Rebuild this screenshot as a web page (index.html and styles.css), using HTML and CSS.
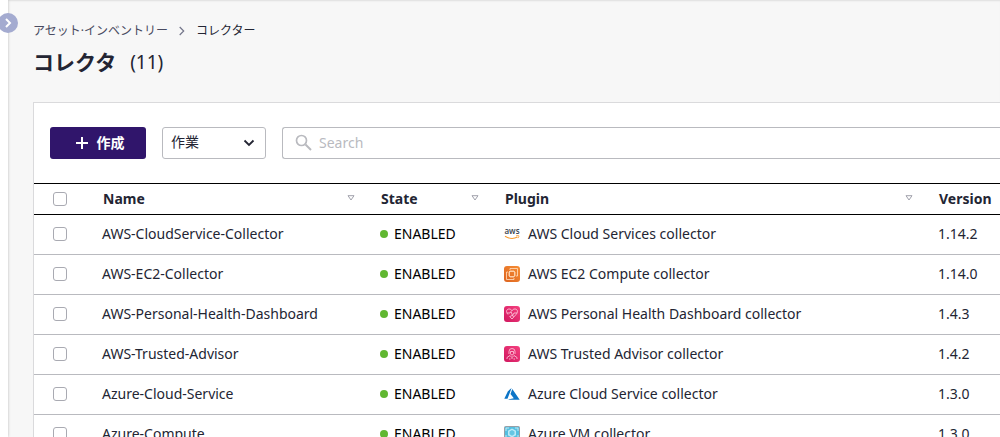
FILE: index.html
```html
<!DOCTYPE html>
<html lang="ja">
<head>
<meta charset="utf-8">
<title>コレクタ</title>
<link rel="stylesheet" href="styles.css">
</head>
<body>
<div class="app">
  <aside class="rail">
    <button class="rail-toggle" type="button" aria-label="メニューを開く">
      <svg width="8" height="10" viewBox="0 0 8 10" fill="none" stroke="#fff" stroke-width="2"><path d="M2 1l4 4-4 4"/></svg>
    </button>
  </aside>
  <main class="main">
    <nav class="crumbs">
      <a class="crumb" href="#">アセット·インベントリー</a>
      <svg width="6" height="10" viewBox="0 0 6 10" fill="none" stroke="#73758a" stroke-width="1.2"><path d="M.7 1l4 4-4 4"/></svg>
      <a class="crumb current" href="#">コレクター</a>
    </nav>
    <h1 class="title">コレクタ <span class="count">(11)</span></h1>
    <section class="card">
      <div class="toolbar">
        <button class="create" type="button">
          <svg width="12" height="12" viewBox="0 0 12 12" stroke="#fff" stroke-width="2"><path d="M6 0v12M0 6h12"/></svg>
          <span>作成</span>
        </button>
        <div class="picker">
          <select class="select" aria-label="作業"><option>作業</option></select>
          <svg class="chevron" width="12" height="8" viewBox="0 0 12 8" fill="none" stroke="#232533" stroke-width="1.8"><path d="M1.500 1.500L6 6l4.500-4.500"/></svg>
        </div>
        <label class="search">
          <svg width="18" height="18" viewBox="0 0 18 18" fill="none" stroke="#b9babf"><circle cx="6.500" cy="6.500" r="5" stroke-width="1.7"/><path d="M10.500 10.500l5.500 5.500" stroke-width="2"/></svg>
          <input class="search-input" type="text" placeholder="Search" aria-label="Search">
        </label>
      </div>
      <table class="table">
        <colgroup><col class="c-check"><col class="c-name"><col class="c-state"><col><col class="c-version"></colgroup>
        <thead>
          <tr>
            <th class="check"><input class="box" type="checkbox" aria-label="すべて選択"></th>
            <th><div class="head">Name <svg class="sort" viewBox="0 0 8 6"><path d="M1 .7h6L4 5z"/></svg></div></th>
            <th><div class="head">State <svg class="sort" viewBox="0 0 8 6"><path d="M1 .7h6L4 5z"/></svg></div></th>
            <th><div class="head">Plugin <svg class="sort" viewBox="0 0 8 6"><path d="M1 .7h6L4 5z"/></svg></div></th>
            <th><div class="head">Version</div></th>
          </tr>
        </thead>
        <tbody>
          <tr>
            <td class="check"><input class="box" type="checkbox" aria-label="AWS-CloudService-Collector"></td>
            <td>AWS-CloudService-Collector</td>
            <td><div class="state">ENABLED</div></td>
            <td><div class="plugin"><svg class="logo" viewBox="0 0 16 16"><text class="aws" x="8" y="8" text-anchor="middle">aws</text><path d="M1 10.300q6.500 4 12.500.8" fill="none" stroke="#f79a2c" stroke-width="1.100"/><path d="M12 9.800q3-.7 3 .1t-1 2.200" fill="none" stroke="#f79a2c" stroke-width=".8"/></svg>AWS Cloud Services collector</div></td>
            <td>1.14.2</td>
          </tr>
          <tr>
            <td class="check"><input class="box" type="checkbox" aria-label="AWS-EC2-Collector"></td>
            <td>AWS-EC2-Collector</td>
            <td><div class="state">ENABLED</div></td>
            <td><div class="plugin"><svg class="logo" viewBox="0 0 16 16"><defs><linearGradient id="orange" x1="0" y1="1" x2="1" y2="0"><stop stop-color="#dd6420"/><stop offset="1" stop-color="#f78e34"/></linearGradient></defs><rect width="16" height="16" rx="3" fill="url(#orange)"/><g fill="none" stroke="#ffe0c2" stroke-width=".8"><rect x="5.500" y="5.500" width="5" height="5"/><path d="M7 5.500V4M9 5.500V4M7 12v-1.500M9 12v-1.500M10.500 7H12M10.500 9H12M5.500 7H4M5.500 9H4M6 4V2.500h7.500V10H12M4 6H2.500v7.500H10V12"/></g></svg>AWS EC2 Compute collector</div></td>
            <td>1.14.0</td>
          </tr>
          <tr>
            <td class="check"><input class="box" type="checkbox" aria-label="AWS-Personal-Health-Dashboard"></td>
            <td>AWS-Personal-Health-Dashboard</td>
            <td><div class="state">ENABLED</div></td>
            <td><div class="plugin"><svg class="logo" viewBox="0 0 16 16"><defs><linearGradient id="pink" x1="0" y1="1" x2="1" y2="0"><stop stop-color="#d0175f"/><stop offset="1" stop-color="#f5417f"/></linearGradient></defs><rect width="16" height="16" rx="3" fill="url(#pink)"/><g fill="none" stroke="#ffd3e3" stroke-width=".8"><path d="M4 8.500C1.500 6 2.500 3 5 3c1.500 0 2.500.7 3 1.700C8.500 3.700 9.500 3 11 3c2.500 0 3.500 3 1 5.500L8 13l-2.500-2.700"/><path d="M3 7h3l1-1.500 1.500 4L10 7h3M6 10.500l2-1 2 1"/></g></svg>AWS Personal Health Dashboard collector</div></td>
            <td>1.4.3</td>
          </tr>
          <tr>
            <td class="check"><input class="box" type="checkbox" aria-label="AWS-Trusted-Advisor"></td>
            <td>AWS-Trusted-Advisor</td>
            <td><div class="state">ENABLED</div></td>
            <td><div class="plugin"><svg class="logo" viewBox="0 0 16 16"><rect width="16" height="16" rx="3" fill="url(#pink)"/><g fill="none" stroke="#ffd3e3" stroke-width=".8"><path d="M5 8V5.500a3 3 0 016 0V8M6.500 5.500h3v2a1.500 1.500 0 01-3 0zM3 13v-1.500L6 9.500l2 2 2-2 3 2V13M5 13h1.500M9.500 13H11M8 11.500V13"/></g></svg>AWS Trusted Advisor collector</div></td>
            <td>1.4.2</td>
          </tr>
          <tr>
            <td class="check"><input class="box" type="checkbox" aria-label="Azure-Cloud-Service"></td>
            <td>Azure-Cloud-Service</td>
            <td><div class="state">ENABLED</div></td>
            <td><div class="plugin"><svg class="logo" viewBox="0 0 16 16" fill="#0b74c7"><path d="M7.600 2L3.900 5.200.3 12.700h3.200zM8.300 3l-1.800 5 3.300 4.300L3.500 13.700h12.200z"/></svg>Azure Cloud Service collector</div></td>
            <td>1.3.0</td>
          </tr>
          <tr>
            <td class="check"><input class="box" type="checkbox" aria-label="Azure-Compute"></td>
            <td>Azure-Compute</td>
            <td><div class="state">ENABLED</div></td>
            <td><div class="plugin"><svg class="logo" viewBox="0 0 16 16"><rect x=".5" y=".5" width="15" height="13" rx="1" fill="#55bfe0" stroke="#989fa6"/><path d="M8 2.500l4 2.200v4.600l-4 2.200-4-2.200V4.700z" fill="#bdeaf7"/><path d="M8 4l2.500 1.500v2.800L8 9.700 5.500 8.300V5.500z" fill="#65c6e3"/><path d="M2 5V2h3M11 2h3v3M2 9v3h3M14 9v3h-3" fill="none" stroke="#d7f3fa" stroke-width=".8"/><path d="M5 15.500h6" stroke="#989fa6"/></svg>Azure VM collector</div></td>
            <td>1.3.0</td>
          </tr>
        </tbody>
      </table>
    </section>
  </main>
</div>
</body>
</html>
```
FILE: styles.css
```css
* { box-sizing: border-box; }

body {
  margin: 0;
  color: #232533;
  font: 14px/20px "Noto Sans", "Noto Sans CJK JP", sans-serif;
}

button, input, select { font: inherit; color: inherit; margin: 0; }

.app {
  display: flex;
  height: 100vh;
  overflow: hidden;
  background: #f7f7f7;
}

.rail {
  position: relative;
  flex: none;
  width: 8px;
  background: #fff;
  box-shadow: 0 0 3px rgba(0, 0, 0, .25);
}

.rail-toggle {
  position: absolute;
  top: 13px;
  left: -2px;
  display: flex;
  align-items: center;
  justify-content: center;
  width: 20px;
  height: 20px;
  padding: 0;
  border: 0;
  border-radius: 50%;
  background: #a4abd0;
}

.main {
  flex: 1;
  min-width: 0;
  padding: 21px 0 0 25px;
  box-shadow: inset 0 2px 2px -1px rgba(0, 0, 0, .1);
}

.crumbs {
  display: flex;
  align-items: center;
  gap: 11px;
  font-size: 12px;
}

.crumb { color: #484a60; text-decoration: none; }
.crumb.current { color: #232533; }

.title {
  display: flex;
  gap: 14px;
  margin: 5px 0 24px;
  font-size: 21px;
  line-height: 32px;
  font-weight: 700;
}

.count { font-size: 19px; font-weight: 400; }

.card {
  border: 1px solid #dadadc;
  border-right: 0;
  background: #fff;
}

.toolbar {
  display: flex;
  gap: 16px;
  padding: 24px 0 24px 16px;
}

.create {
  display: flex;
  align-items: center;
  justify-content: center;
  gap: 9px;
  width: 96px;
  height: 32px;
  padding: 0 0 0 4px;
  border: 0;
  border-radius: 3px;
  background: #30156b;
  color: #fff;
  font-weight: 700;
}

.picker { position: relative; width: 104px; }

.select {
  width: 100%;
  height: 32px;
  padding: 0 8px 2px;
  border: 1px solid #b9babf;
  border-radius: 3px;
  background: #fff;
  appearance: none;
}

.chevron {
  position: absolute;
  top: 12px;
  right: 11px;
  pointer-events: none;
}

.search {
  display: flex;
  flex: 1;
  align-items: center;
  gap: 6px;
  height: 32px;
  padding-left: 12px;
  border: 1px solid #b9babf;
  border-right: 0;
  border-radius: 3px 0 0 3px;
}

.search-input {
  flex: 1;
  min-width: 0;
  padding: 0;
  border: 0;
  outline: 0;
  background: none;
}

.search-input::placeholder { color: #b9babf; opacity: 1; }

.table {
  width: 100%;
  table-layout: fixed;
  border-collapse: separate;
  border-spacing: 0;
}

.c-check { width: 60px; }
.c-name { width: 278px; }
.c-state { width: 124px; }
.c-version { width: 70px; }

th, td { padding: 0 0 0 8px; text-align: left; white-space: nowrap; }

th {
  height: 32px;
  border-top: 1px solid #000;
  border-bottom: 1px solid #000;
}

td {
  height: 40px;
  padding-bottom: 2px;
  border-bottom: 1px solid #b9babf;
}

.table .check { padding-left: 19px; }

.box {
  display: block;
  width: 14px;
  height: 14px;
  border: 1px solid #a9aab2;
  border-radius: 3px;
  background: #fff;
  appearance: none;
}

.head {
  display: flex;
  align-items: center;
  justify-content: space-between;
  padding: 0 17px 0 1px;
}

.table th:last-child .head { padding-right: 0; }

.sort {
  width: 8px;
  height: 6px;
  margin-bottom: 2px;
  fill: none;
  stroke: #a0a1ab;
  stroke-width: 1;
}

.state { display: flex; align-items: center; gap: 6px; color: #000; }

.state::before {
  content: "";
  width: 8px;
  height: 8px;
  border-radius: 50%;
  background: #60b731;
}

.plugin { display: flex; align-items: center; gap: 8px; }
.logo { flex: none; width: 16px; height: 16px; }
.aws { font: 600 8px "Open Sans", sans-serif; fill: #343e4c; }
```
